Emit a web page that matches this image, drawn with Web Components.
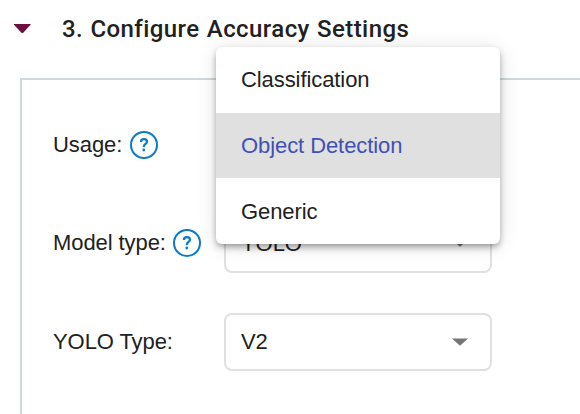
<!DOCTYPE html>
<html lang="en"><head><meta charset="utf-8"><title>Accuracy Settings</title>
<style>
html,body{margin:0;height:100%;overflow:hidden;background:#fff}
</style></head><body>
<accuracy-settings></accuracy-settings>
<script>
const define=(name,html)=>customElements.define(name,class extends HTMLElement{
  constructor(){super();const t=document.createElement('template');t.innerHTML=html;
    this.attachShadow({mode:'open'}).append(t.content.cloneNode(true));}
});
define('section-heading',`<style>
:host{display:flex;align-items:center;height:58px;padding-left:14px;box-sizing:border-box;font:500 24px/32px Roboto,sans-serif;letter-spacing:.42px;word-spacing:.9px;color:#212121}
svg{display:block;width:17px;height:10px;flex:none;margin:0 31px 1px 0}
span{white-space:nowrap}
</style><svg viewBox="0 0 17 10"><path d="M0 0H16.6V.8L9.2 8.8Q8.3 9.7 7.4 8.8L0 .8Z" fill="#6a1140"/></svg><span><slot></slot></span>`);
define('help-icon',`<style>
:host{display:block;width:28px;height:28px;flex:none}svg{display:block}
</style><svg width="28" height="28" viewBox="0 0 28 28" fill="none" stroke="#0a7acb"><circle cx="14" cy="14" r="13" stroke-width="2"/><path d="M10.9 10.9C10.9 9 12.1 8.1 14 8.1s3 1 3 2.6c0 2.2-3.2 2.4-3.2 5.2" stroke-width="2.2"/><circle cx="13.8" cy="19" r="1.4" fill="#0a7acb" stroke="none"/></svg>`);
define('select-box',`<style>
:host{display:flex;align-items:center;justify-content:space-between;box-sizing:border-box;width:268px;height:58px;border:2px solid #e0e0e0;border-radius:8px;padding:0 22px 0 15px;background:#fff}
svg{display:block;margin-bottom:1px}
</style><span><slot></slot></span><svg width="16" height="8" viewBox="0 0 16 8"><path d="M0 .5H16L8 7.8Z" fill="#757575"/></svg>`);
define('form-row',`<style>
:host{display:grid;grid-template-columns:171px 268px;align-items:center;height:58px}
.label{display:flex;align-items:center;gap:7.5px;white-space:nowrap}
:host([raised]) .label{padding-bottom:2px}
</style><div class="label"><slot name="label"></slot><slot name="help"></slot></div><slot></slot>`);
define('settings-panel',`<style>
:host{display:grid;grid-template-rows:58px 58px 58px;row-gap:40.5px;box-sizing:border-box;height:350px;margin:20px 0 0 20px;border:2px solid #cfd8dc;border-right:0;border-bottom:0;padding:36px 0 0 31px}
</style><slot></slot>`);
define('menu-item',`<style>
:host{display:flex;align-items:center;height:66px;padding:0 25px;box-sizing:border-box}
:host([selected]){background:#e0e0e0;color:#3f51b5;height:65px}
:host(:last-of-type){padding-top:2px}
</style><slot></slot>`);
define('drop-menu',`<style>
:host{display:block;position:absolute;left:216px;top:47px;width:284px;height:197px;border-radius:6px;background:#fff;box-shadow:0 3px 6px -2px rgba(0,0,0,.3),0 4px 7px rgba(0,0,0,.16),0 2px 20px rgba(0,0,0,.12);overflow:hidden}
</style><slot></slot>`);
define('accuracy-settings',`<style>
:host{display:block;position:relative;width:580px;height:414px;overflow:hidden;font:22px/28px "Liberation Sans",Arial,sans-serif;letter-spacing:-.08px;color:#212121}
</style>
<section-heading>3. Configure Accuracy Settings</section-heading>
<settings-panel>
<form-row><span slot="label">Usage:</span><help-icon slot="help"></help-icon></form-row>
<form-row raised><span slot="label">Model type:</span><help-icon slot="help"></help-icon><select-box>YOLO</select-box></form-row>
<form-row><span slot="label">YOLO Type:</span><select-box>V2</select-box></form-row>
</settings-panel>
<drop-menu><menu-item>Classification</menu-item><menu-item selected>Object Detection</menu-item><menu-item>Generic</menu-item></drop-menu>`);
</script></body></html>
